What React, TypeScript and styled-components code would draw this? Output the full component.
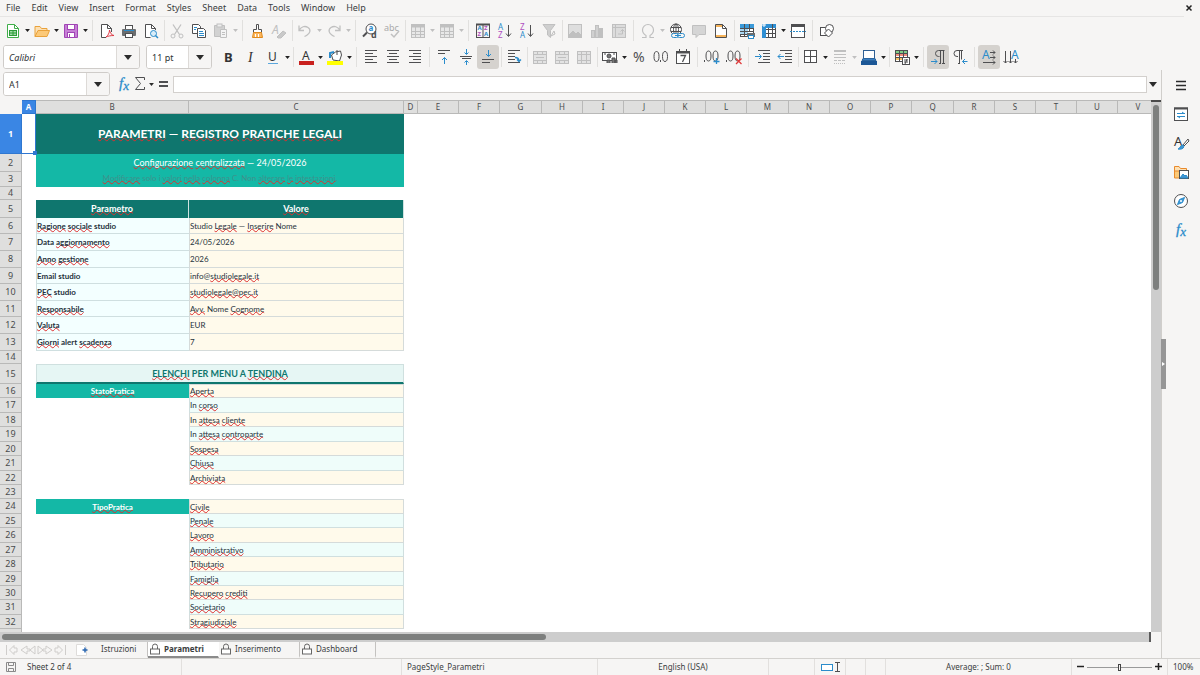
import React from "react";
import styled, { createGlobalStyle, css } from "styled-components";

const ink = "#4f4f51";
const blue = "#2b8ccb";
const off = "#c0c0c0";
const ui = `"Noto Sans", "Open Sans", sans-serif`;
const sheetFont = `Lato, "Noto Sans", sans-serif`;

const Global = createGlobalStyle`
  *, *::before, *::after { box-sizing: border-box; }
  body { margin: 0; background: #f6f5f4; font-family: ${ui}; color: #3a3d3e; }
  button, input { font: inherit; color: inherit; margin: 0; }
  button { border: 0; padding: 0; background: none; }
  svg { overflow: visible; flex: none; }
`;

/* ---------- frame ---------- */

const Window = styled.div`
  display: flex;
  flex-direction: column;
  height: 100vh;
  min-height: 320px;
  overflow: hidden;
`;

const MenuBar = styled.nav`
  display: flex;
  align-items: center;
  gap: 11px;
  height: 17px;
  padding: 0 7px 0 6px;
  margin-right: 16px;
  border-bottom: 1px solid #e6e5e4;
  font-size: 9px;
  line-height: 16px;
  white-space: nowrap;
`;

const MenuItem = styled.button``;

const TopRow = styled.header`
  position: relative;
`;

const CloseButton = styled.button`
  position: absolute;
  top: 0;
  right: 3px;
  width: 16px;
  height: 16px;
  display: flex;
  align-items: center;
  justify-content: center;
`;

const Toolbar = styled.div<{ $pad: number; $h: number }>`
  display: flex;
  align-items: center;
  height: ${(p) => p.$h}px;
  padding-left: ${(p) => p.$pad}px;
`;

const Tool = styled.button<{ $active?: boolean; $slim?: boolean }>`
  flex: none;
  width: ${(p) => (p.$slim ? 16 : 22)}px;
  height: 24px;
  display: flex;
  align-items: center;
  justify-content: center;
  border-radius: 3px;
  background: ${(p) => (p.$active ? "#d5d2ce" : "transparent")};
`;

const DropArrow = styled.button`
  flex: none;
  width: 7px;
  height: 24px;
  display: flex;
  align-items: center;
  justify-content: center;
`;

const Divider = styled.span<{ $wide?: boolean }>`
  flex: none;
  align-self: stretch;
  width: ${(p) => (p.$wide ? 7 : 4)}px;
  margin: 3px 0;
  background: linear-gradient(#e1e0de, #e1e0de) center / 1px 100% no-repeat;
`;

const Combo = styled.div<{ $width: number }>`
  flex: none;
  display: flex;
  width: ${(p) => p.$width}px;
  height: 24px;
  margin-right: 6px;
  border: 1px solid #cfccc9;
  border-radius: 3px;
  background: #fff;
  overflow: hidden;
`;

const ComboInput = styled.input<{ $italic?: boolean }>`
  flex: 1;
  min-width: 0;
  border: 0;
  padding: 0 5px;
  background: #fff;
  font-size: 9px;
  font-style: ${(p) => (p.$italic ? "italic" : "normal")};
  color: #2e3436;
`;

const ComboButton = styled.button`
  width: 23px;
  display: flex;
  align-items: center;
  justify-content: center;
  border-left: 1px solid #dddad7;
  background: #f6f5f4;
`;

const Body = styled.div`
  flex: 1;
  min-height: 0;
  display: flex;
`;

const Main = styled.main`
  flex: 1;
  min-width: 0;
  display: flex;
  flex-direction: column;
  border-right: 1px solid #d0cecb;
`;

const Sidebar = styled.aside`
  position: relative;
  width: 38px;
  display: flex;
  flex-direction: column;
  align-items: center;
  gap: 5px;
  padding-top: 3px;
`;

const SideButton = styled.button`
  width: 24px;
  height: 24px;
  display: flex;
  align-items: center;
  justify-content: center;
`;

const SideHandle = styled.button`
  position: absolute;
  left: -1px;
  top: 269px;
  width: 5px;
  height: 50px;
  display: flex;
  align-items: center;
  justify-content: center;
  background: #969696;
`;

const FormulaRow = styled.div`
  display: flex;
  align-items: center;
  height: 30px;
  padding: 0 5px 2px 3px;
  flex: none;
`;

const FormulaInput = styled.input`
  flex: 1;
  min-width: 0;
  height: 17px;
  margin: 0 2px;
  padding: 0 4px;
  border: 1px solid #d3d0cd;
  background: #fff;
  font-size: 9px;
`;

/* ---------- sheet ---------- */

const SheetRow = styled.div`
  flex: 1;
  min-height: 0;
  display: flex;
`;

const SheetArea = styled.div`
  flex: 1;
  min-width: 0;
  overflow: hidden;
  background: linear-gradient(#dfdfde, #dfdfde) top / 100% 14px no-repeat, #fff;
`;

const Grid = styled.table`
  table-layout: fixed;
  width: 1156px;
  border-collapse: separate;
  border-spacing: 0;
`;

const Col = styled.col<{ $w: number }>`
  width: ${(p) => p.$w}px;
`;

const Row = styled.tr<{ $h: number }>`
  height: ${(p) => p.$h}px;
`;

const Corner = styled.td`
  padding: 0;
  background: #f6f5f4;
`;

const headCell = css<{ $on?: boolean }>`
  padding: 0;
  text-align: center;
  vertical-align: middle;
  overflow: hidden;
  border: solid ${(p) => (p.$on ? "#2f77d0" : "#b9b9b8")};
  background: ${(p) => (p.$on ? "#3a86e4" : "#dfdfde")};
  color: ${(p) => (p.$on ? "#fff" : "#4a4c4d")};
  font-weight: ${(p) => (p.$on ? 700 : 400)};
`;

const ColHead = styled.th<{ $on?: boolean }>`
  ${headCell}
  border-width: 1px 1px 1px 0;
  font-size: 8px;
  line-height: 10px;
`;

const RowHead = styled.th<{ $on?: boolean }>`
  ${headCell}
  border-width: 0 1px 1px 0;
  font-size: 9px;
  line-height: 10px;
`;

type Kind = "title" | "sub" | "note" | "head" | "label" | "value" | "mint" | "section" | "tag";

const kinds: Record<Kind, ReturnType<typeof css>> = {
  title: css`background: #0f766e; color: #fff; font-size: 12px; line-height: 16px; font-weight: 700; text-align: center;`,
  sub: css`background: #14b8a6; color: #fff; font-size: 9px; text-align: center;`,
  note: css`background: #14b8a6; color: #3f918b; text-align: center; vertical-align: top;`,
  head: css`background: #0f766e; color: #fff; font-size: 9px; font-weight: 700; text-align: center; border-right: 1px solid #cfe3e1;`,
  label: css`background: #f3ffff; font-weight: 700; border: solid #cfdfe0; border-width: 0 0 1px 1px;`,
  value: css`background: #fffaeb; border: solid #d5dbda; border-width: 0 1px 1px 1px;`,
  mint: css`background: #effdfa; border: solid #d0dfdf; border-width: 0 1px 1px 1px;`,
  section: css`background: #e6f6f4; color: #0f766e; font-size: 9px; font-weight: 700; text-align: center; border: 1px solid #cfe0df; border-bottom: 2px solid #0f766e;`,
  tag: css`background: #14b8a6; color: #fff; font-weight: 700; text-align: center;`,
};

const Cell = styled.td<{ $kind: Kind; $topLine?: boolean }>`
  padding: 0;
  white-space: nowrap;
  vertical-align: middle;
  font-family: ${sheetFont};
  font-size: 8px;
  line-height: 12px;
  color: #26323c;
  ${(p) => kinds[p.$kind]}
  ${(p) => p.$topLine && css`border-top-width: 1px;`}
`;

const Blank = styled.td`
  padding: 0;
`;

const Cursor = styled.td`
  position: relative;
  padding: 0;
  border: solid #2f77d0;
  border-width: 0 1px 1px 0;
  &::after {
    content: "";
    position: absolute;
    right: -2px;
    bottom: -2px;
    width: 4px;
    height: 4px;
    background: #2f77d0;
  }
`;

const Misspelt = styled.span`
  text-decoration: underline wavy #dd2f2f 1px;
  text-underline-offset: -1px;
  text-decoration-skip-ink: none;
`;

const VTrack = styled.div`
  width: 10px;
  padding: 1px 2px 0;
  background: #cdcdcd;
  border-top: 2px solid #4a4a4a;
`;

const VThumb = styled.div`
  height: 35%;
  margin-top: 2px;
  border-radius: 3px;
  background: #7d7f7e;
`;

const HTrack = styled.div`
  flex: none;
  height: 10px;
  margin-right: 10px;
  padding: 2px 0 2px 2px;
  background: #cdcdcd;
  border-right: 2px solid #5a5a5a;
`;

const HThumb = styled.div`
  width: 47.4%;
  height: 6px;
  border-radius: 3px;
  background: #7d7f7e;
`;

const TabBar = styled.div`
  flex: none;
  display: flex;
  height: 16px;
  padding-left: 5px;
  font-size: 8px;
  line-height: 14px;
`;

const TabTools = styled.div`
  display: flex;
  align-items: center;
  width: 86px;
  gap: 9px;
`;

const Tab = styled.button<{ $active?: boolean; $width: number; $line?: boolean; $plain?: boolean }>`
  display: flex;
  align-items: center;
  gap: 4px;
  width: ${(p) => p.$width}px;
  padding-left: ${(p) => (p.$plain ? 10 : 2)}px;
  white-space: nowrap;
  background: ${(p) => (p.$active ? "#fff" : "transparent")};
  border-bottom: 2px solid ${(p) => (p.$active ? "#8b8b8b" : "transparent")};
  border-right: 1px solid ${(p) => (p.$line ? "#c4c2c0" : "transparent")};
  font-weight: ${(p) => (p.$active ? 700 : 400)};
`;

const StatusBar = styled.footer`
  flex: none;
  display: grid;
  grid-template-columns: 182fr 220fr 196fr 171fr 46px 31px 20px 20px 186fr 96px 32px;
  height: 17px;
  border-top: 1px solid #d3d1ce;
  font-size: 8px;
  line-height: 16px;
  white-space: nowrap;
`;

const Status = styled.div<{ $center?: boolean }>`
  display: flex;
  align-items: center;
  justify-content: ${(p) => (p.$center ? "center" : "flex-start")};
  gap: 10px;
  padding: 0 5px;
  border-right: 1px solid #e2e0de;
  overflow: hidden;
  &:last-child { border-right: 0; }
`;

const ZoomBox = styled(Status)`
  gap: 3px;
`;

const ZoomRange = styled.input`
  appearance: none;
  flex: 1;
  min-width: 0;
  height: 9px;
  background: linear-gradient(#9a9a9a, #9a9a9a) center / 100% 1px no-repeat;
  &::-webkit-slider-thumb {
    appearance: none;
    width: 3px;
    height: 7px;
    border: 1px solid #444;
    background: #f6f5f4;
  }
`;

/* ---------- icons ---------- */

type SvgProps = { children: React.ReactNode; w?: number; h?: number; c?: string };

const Svg = ({ children, w = 16, h = 16, c = ink }: SvgProps) => (
  <svg width={w} height={h} viewBox={`0 0 ${w} ${h}`} fill="none" stroke={c} strokeWidth="1" aria-hidden="true">
    {children}
  </svg>
);

const Glyph = ({ x, y, size, fill, children, bold, italic, serif }: {
  x: number; y: number; size: number; fill: string; children: string; bold?: boolean; italic?: boolean; serif?: boolean;
}) => (
  <text x={x} y={y} fontSize={size} fill={fill} stroke="none" fontWeight={bold ? 700 : 400} fontStyle={italic ? "italic" : "normal"}
    fontFamily={serif ? "Liberation Serif, serif" : "Noto Sans, sans-serif"}>{children}</text>
);

const Caret = ({ c = "#2b2b2b", w = 5 }: { c?: string; w?: number }) => (
  <svg width={w} height={w === 5 ? 3 : 5} viewBox="0 0 8 5" aria-hidden="true"><path d="M0 0h8L4 5z" fill={c} /></svg>
);

const lines = (rows: [number, number, number][]) => rows.map(([y, a, b]) => <path key={y} d={`M${a} ${y}.5H${b}`} />);

const TableShape = ({ c = off }: { c?: string }) => (
  <g stroke={c}><rect x="1.5" y="1.5" width="13" height="13" fill="#e8e8e8" /><path d="M1.5 3h13" strokeWidth="3" /><path d="M1 8.5h14M1 11.5h14M5.5 2v13M10.5 2v13" /></g>
);

const Fx = () => (
  <Svg>
    <text x="3" y="12" fontSize="15" fill={blue} stroke={blue} strokeWidth="0.3" fontStyle="italic" fontFamily="Liberation Serif, serif">
      f<tspan dy="2" fontSize="13">x</tspan>
    </text>
  </Svg>
);

const Lock = () => (
  <Svg w={10} h={12} c="#666"><rect x="0.5" y="6" width="9" height="5" fill="#fff" /><path d="M2.5 6V3.5a2.500 2.500 0 0 1 5 0V6" /></Svg>
);

const icons: Record<string, React.ReactNode> = {
  new: <Svg><path d="M2.500 1.500h7l4 4v9h-11z" fill="#fff" stroke="#3fae49" /><path d="M9.500 1.500v4h4" stroke="#3fae49" /><rect x="4.500" y="7.500" width="7" height="5" fill="#9fdca5" stroke="#2c9a39" /><path d="M4.500 10h7M8 7.500v5" stroke="#2c9a39" /></Svg>,
  open: <Svg><path d="M1 13.500v-10h5l1.500 2H13v2" fill="#fde0b3" stroke="#e9a23b" /><path d="M1 13.500l3-6h11.500l-2.500 6z" fill="#fcc978" stroke="#e9a23b" /></Svg>,
  save: <Svg c="#a145b5"><path d="M1.500 1.500h13v13h-13z" fill="#c77fd6" /><rect x="4.500" y="1.500" width="7" height="5" fill="#fff" /><rect x="4.500" y="9.500" width="7" height="5" fill="#fff" /><path d="M6.500 11v3" /></Svg>,
  pdf: <Svg><path d="M12.500 9V5.500l-4-4h-6v13H7" fill="#fff" /><path d="M8.500 1.500v4h4" /><path d="M7 14c2-1.500 3.500-4 3.500-7 .5 3 2 5 4.500 5.500-3 0-6 .5-8 1.500z" stroke="#e03a46" /></Svg>,
  print: <Svg><rect x="4.500" y="2.500" width="7" height="4" fill="#fff" /><rect x="1" y="6" width="14" height="7" rx="1" fill="#6b6e70" stroke="none" /><path d="M3 7.500h10" stroke={blue} /><rect x="4.500" y="10.500" width="7" height="4" fill="#fff" /></Svg>,
  preview: <Svg><path d="M12.500 7V5.500l-4-4h-6v13h5" fill="#fff" /><path d="M8.500 1.500v4h4" /><circle cx="10.500" cy="10.500" r="3" stroke={blue} fill="#d9edf9" /><path d="M12.500 12.500l2.500 2.500" stroke={blue} strokeWidth="1.500" /></Svg>,
  cut: <Svg c={off}><path d="M4 1.500l6.500 10M12 1.500l-6.500 10" strokeWidth="1.300" /><circle cx="4" cy="13" r="2" /><circle cx="12" cy="13" r="2" /></Svg>,
  copy: <Svg><path d="M1.500 1.500h6l2 2v7h-8z" fill="#fff" /><path d="M6.500 5.500h6l2 2v7h-8z" fill="#fff" /><path d="M3 4.500h3M3 6.500h2M8 8.500h4M8 10.500h5M8 12.500h5" stroke={blue} /></Svg>,
  paste: <Svg c={off}><path d="M1.500 2.500h10v11h-10z" fill="#d2d2d2" /><rect x="4" y="1" width="5" height="3" fill="#eee" /><path d="M7.500 6.500h6v8h-6z" fill="#f4f4f4" /><path d="M9 9.500h3M9 11.500h3" /></Svg>,
  brush: <Svg><path d="M7.500 1.500h2v5h3v3h-8v-3h3z" fill="#fff" /><path d="M4.500 9.500h8l1 5h-10z" fill="#fcb65c" stroke="#e08a1d" /><path d="M6.500 11v3M9.500 11v3" stroke="#fff" /></Svg>,
  clear: <Svg c={off}><Glyph x={1} y={11} size={12} fill={off} italic>A</Glyph><path d="M6 14l6-6 3 2-5 5H7z" fill="#c9c9c9" /></Svg>,
  undo: <Svg c={off}><path d="M2 2.500v5h5M2 7.500c2-4 6-5 9-3s3 6-3.500 9" strokeWidth="1.300" /></Svg>,
  redo: <Svg c={off}><path d="M14 2.500v5H9M14 7.500c-2-4-6-5-9-3s-3 6 3.500 9" strokeWidth="1.300" /></Svg>,
  find: <Svg><circle cx="9" cy="6" r="5" fill="#fff" /><path d="M5 9.500l-4 4" strokeWidth="2" /><Glyph x={6.500} y={8} size={8} fill={blue} bold>a</Glyph><Glyph x={9} y={15} size={9} fill={ink} bold>d</Glyph></Svg>,
  spell: <Svg c={off}><Glyph x={0} y={8} size={9} fill="#aaaaaa">abc</Glyph><path d="M7 11l3 3 5-6" strokeWidth="1.500" /></Svg>,
  table: <Svg><TableShape /></Svg>,
  sort: <Svg><path d="M1.500 1v14M8 1v14M14.500 1v14M1 14.500h14" /><path d="M1 1.500h14" strokeWidth="2" /><Glyph x={2.500} y={7} size={6} fill={blue} bold>A</Glyph><Glyph x={2.500} y={13} size={6} fill="#b04fc0" bold>Z</Glyph><Glyph x={9} y={7} size={6} fill="#b04fc0" bold>Z</Glyph><Glyph x={9} y={13} size={6} fill={blue} bold>A</Glyph></Svg>,
  asc: <Svg><Glyph x={1} y={7} size={8} fill={blue}>A</Glyph><Glyph x={1} y={15} size={8} fill="#b04fc0">Z</Glyph><path d="M11.500 2v11M9 10.500l2.500 3 2.500-3" /></Svg>,
  desc: <Svg><Glyph x={1} y={7} size={8} fill="#b04fc0">Z</Glyph><Glyph x={1} y={15} size={8} fill={blue}>A</Glyph><path d="M11.500 2v11M9 10.500l2.500 3 2.500-3" /></Svg>,
  filter: <Svg c={off}><path d="M2 1.500h12l-4.500 6v7l-3-2.500V7.500z" fill="#cfcfcf" /><path d="M10 13l3-5 1 3z" /></Svg>,
  image: <Svg c={off}><rect x="1.500" y="1.500" width="13" height="13" fill="#dedede" /><path d="M2 12l4-4 3 3 2-2 3 3v2H2z" fill={off} /></Svg>,
  chart: <Svg c={off}><rect x="2.500" y="7.500" width="3" height="7" fill="#d0d0d0" /><rect x="6.500" y="2.500" width="3" height="12" fill="#d0d0d0" /><rect x="10.500" y="5.500" width="3" height="9" fill={off} /></Svg>,
  pivot: <Svg c={off}><rect x="1.500" y="1.500" width="13" height="13" fill="#dcdcdc" /><path d="M1 4.500h14M4.500 1v14M7 11h4.500V6.500M9.500 8.500l2-2 2 2" /></Svg>,
  omega: <Svg c={off}><path d="M2 14.500h4v-2C3.500 11 2.500 9 2.500 7a5.500 5.500 0 0 1 11 0c0 2-1 4-3.500 5.500v2h4" strokeWidth="1.200" /></Svg>,
  globe: <Svg><circle cx="7" cy="6.500" r="5.500" fill="#fff" /><ellipse cx="7" cy="6.500" rx="2.500" ry="5.500" /><path d="M2 4.500h10M2 8.500h10M7 1v11" /><rect x="2.500" y="10.500" width="7" height="4" rx="2" stroke={blue} fill="#f6f5f4" /><rect x="8.500" y="10.500" width="7" height="4" rx="2" stroke={blue} fill="#f6f5f4" /><path d="M6 12.500h6" stroke={blue} /></Svg>,
  comment: <Svg c={off}><path d="M1.500 2.500h13v9H8l-3 3v-3H1.500z" fill="#d5d5d5" /></Svg>,
  header: <Svg><path d="M2.500 1.500h7l4 4v9h-11z" fill="#fff" /><path d="M3 3h6M3 13h10" stroke="#f5b35a" strokeWidth="2" /><path d="M9.500 1.500v4h4" /></Svg>,
  printArea: <Svg><rect x="1.500" y="1.500" width="13" height="12" fill="#fff" /><rect x="1" y="1" width="14" height="4" fill="#3b9ad9" stroke="none" /><rect x="1" y="5" width="8" height="6" fill="#a9d7f3" stroke="none" /><path d="M1 5.500h14M1 8.500h14M1 11.500h8M5.500 1v12M10.500 1v8" /><rect x="8" y="10" width="8" height="4" fill="#6b6e70" stroke="none" /><rect x="9.500" y="12.500" width="5" height="3" fill="#fff" stroke={blue} /></Svg>,
  freeze: <Svg><rect x="1.500" y="1.500" width="13" height="13" fill="#fff" /><path d="M1 3h14M3 1v14" stroke="#2f8fd3" strokeWidth="4" /><path d="M5 6.500h10M5 10.500h10M7.500 5v10M11.500 1v14" /><path d="M3 0v4M1 2h4" stroke="#fff" /></Svg>,
  split: <Svg><rect x="1.500" y="1.500" width="13" height="13" fill="#fff" /><path d="M1 2.500h14" strokeWidth="3" /><path d="M0 8.500h16" stroke={blue} strokeDasharray="2 1" /></Svg>,
  shapes: <Svg><rect x="1.500" y="4.500" width="8" height="8" fill="#fff" /><circle cx="10.500" cy="5.500" r="4" fill="#fff" /><path d="M9.500 6l4 4-4 4-4-4z" fill="#fff" /></Svg>,
  bold: <Svg><Glyph x={3} y={13} size={13} fill="#333" bold>B</Glyph></Svg>,
  italic: <Svg><Glyph x={5} y={13} size={14} fill="#333" italic serif>I</Glyph></Svg>,
  underline: <Svg><Glyph x={3} y={12} size={12} fill="#333">U</Glyph><path d="M3 14.500h10" stroke="#5ba7dc" /></Svg>,
  color: <Svg><Glyph x={4} y={11} size={12} fill="#333">A</Glyph><path d="M1 14h15" stroke="#c9211e" strokeWidth="4" /></Svg>,
  highlight: <Svg><path d="M6 11L4.500 6l4-3 5-1 1 4-2 6z" fill="#fff" /><path d="M3 9V4l4-1" stroke={blue} strokeWidth="2" /><path d="M10 1v5" /><path d="M0 14h16" stroke="#ffff00" strokeWidth="4" /></Svg>,
  left: <Svg>{lines([[1, 2, 14], [4, 2, 10], [7, 2, 14], [10, 2, 10], [13, 2, 14]])}</Svg>,
  center: <Svg>{lines([[1, 2, 14], [4, 4, 12], [7, 2, 14], [10, 4, 12], [13, 2, 14]])}</Svg>,
  right: <Svg>{lines([[1, 2, 14], [4, 6, 14], [7, 2, 14], [10, 6, 14], [13, 2, 14]])}</Svg>,
  top: <Svg>{lines([[1, 2, 14], [4, 2, 9]])}<path d="M8.500 15V8.500M6 11l2.500-2.500L11 11" stroke={blue} /></Svg>,
  middle: <Svg>{lines([[7, 2, 14], [9, 4, 13]])}<path d="M8.500 0v5M6.500 3.500l2 2 2-2M8.500 16v-4M6.500 13.500l2-2 2 2" stroke={blue} /></Svg>,
  bottom: <Svg>{lines([[10, 2, 14], [13, 2, 10]])}<path d="M8.500 1v6M6 5l2.500 2.500L11 5" stroke={blue} /></Svg>,
  wrap: <Svg>{lines([[1, 2, 14], [4, 2, 9], [7, 2, 9], [10, 2, 9], [13, 2, 14]])}<path d="M9 8.500c3 0 4 1 4 3.500M11 10.500l2 2 2-2" stroke={blue} strokeWidth="1.300" /></Svg>,
  merge: <Svg c={off}><rect x="1.500" y="2.500" width="13" height="12" fill="#e3e3e3" /><path d="M1 5.500h14M1 11.500h14M5.500 2v3M10.500 2v3M5.500 12v3M10.500 12v3M4 8.500h8" /></Svg>,
  split2: <Svg c={off}><rect x="1.500" y="2.500" width="13" height="12" fill="#e3e3e3" /><path d="M1 5.500h14M1 11.500h14M5.500 2v13M10.500 2v13" /></Svg>,
  currency: <Svg><rect x="0.500" y="3.500" width="14" height="8" fill="#fff" /><circle cx="7" cy="7" r="2" fill="#777" /><path d="M5 14v-3h3v3M10 14V9h3v5M13 14v-3h2v3" fill="#777" /><path d="M2 5h2M11 5h2" /></Svg>,
  percent: <Svg><Glyph x={2} y={13} size={14} fill={ink}>%</Glyph></Svg>,
  number: <Svg><ellipse cx="3.500" cy="7.500" rx="2.500" ry="5" /><path d="M7.500 11v2" /><ellipse cx="12" cy="7.500" rx="2.500" ry="5" /></Svg>,
  date: <Svg><rect x="1.500" y="2.500" width="13" height="12" fill="#fff" /><path d="M1 3.500h14" strokeWidth="2" /><path d="M4.500 0v3M11.500 0v3" /><path d="M5.500 6.500h5l-3 6.500" strokeWidth="1.300" /></Svg>,
  addDec: <Svg><path d="M.5 11v2" /><ellipse cx="4.500" cy="7" rx="2.500" ry="5" /><ellipse cx="11.500" cy="7" rx="2.500" ry="5" /><path d="M12.500 9v6M9.500 12.500h6" stroke={blue} strokeWidth="1.300" /></Svg>,
  delDec: <Svg><path d="M.5 11v2" /><ellipse cx="4.500" cy="7" rx="2.500" ry="5" /><ellipse cx="11.500" cy="7" rx="2.500" ry="5" /><path d="M10 9.500l5.500 5.500M15.500 9.500L10 15" stroke="#e03a3a" strokeWidth="1.300" /></Svg>,
  indent: <Svg>{lines([[1, 3, 15], [4, 8, 15], [7, 8, 15], [10, 8, 15], [13, 3, 15]])}<path d="M0 7.500h6M4 5l2.500 2.500L4 10" stroke={blue} /></Svg>,
  outdent: <Svg>{lines([[1, 3, 15], [4, 8, 15], [7, 8, 15], [10, 8, 15], [13, 3, 15]])}<path d="M1 7.500h6M3.500 5L1 7.500 3.500 10" stroke={blue} /></Svg>,
  border: <Svg><rect x="1.500" y="1.500" width="12" height="12" fill="#fff" /><path d="M7.500 1v13M1 7.500h13" /></Svg>,
  borderStyle: <Svg c={off}><path d="M2 2h12" strokeWidth="2" /><path d="M2 5.500h12M2 8.500h12" /><path d="M2 11.500h12" strokeDasharray="3 1" /><path d="M2 14.500h12" strokeDasharray="1 1" /></Svg>,
  borderColor: <Svg><rect x="2.500" y="1.500" width="11" height="8" fill="#fff" stroke="#2f5f93" /><path d="M2 9.500h12l1 2H1z" fill="#3b7ec0" stroke="#2b659f" /><path d="M0 14h16" stroke="#1c5796" strokeWidth="4" /></Svg>,
  conditional: <Svg><rect x="1.500" y="1.500" width="12" height="11" fill="#fff" /><path d="M2 3h11" stroke="#7fcf87" strokeWidth="2" /><path d="M2 6h11" stroke="#f08a7a" strokeWidth="2" /><path d="M2 10h6" stroke="#f6c26b" strokeWidth="2" /><path d="M1 4.500h13M1 8.500h13M5.500 1v12M9.500 1v8" /><rect x="8.500" y="8.500" width="7" height="7" fill="#fff" /><path d="M10 11h4M10 13h4M13 10l-2 5" /></Svg>,
  ltr: <Svg><path d="M14.500 1.500H8.500a3 3 0 0 0 0 6h1M10.500 1.500v13M13.500 1.500v13M9 14.500h2M12 14.500h3" /><path d="M1 12.500h6M4.500 10L7 12.500 4.500 15" stroke={blue} /></Svg>,
  rtl: <Svg><path d="M11 1.500H5a3 3 0 0 0 0 6h1M7.500 1.500v13M9.500 1.500v9M6 14.500h2" /><path d="M15.500 12.500h-5M13 10l-2.500 2.500L13 15" stroke={blue} /></Svg>,
  horiz: <Svg><Glyph x={1} y={10} size={12} fill={blue}>A</Glyph><path d="M9 3.500h5M12 1.500l2 2-2 2M9 8.500h5M12 6.500l2 2-2 2M2 13.500h12M12 11.500l2 2-2 2" /></Svg>,
  vert: <Svg><Glyph x={8} y={10} size={12} fill={blue}>A</Glyph><path d="M2.500 2v12M.5 12l2 2 2-2M7.500 2v12M5.500 12l2 2 2-2M12.500 10v4M10.500 12l2 2 2-2" /></Svg>,
  sum: <Svg><path d="M12.500 4v-2.500h-9l5 6-5 6h9V11" /></Svg>,
  equals: <Svg><path d="M4 6h9M4 10h9" strokeWidth="2" /></Svg>,
};

type Item = { id: string; label: string; drop?: "on" | "off"; active?: boolean } | "sep" | "wide";

const standardBar: Item[] = [
  { id: "new", label: "New", drop: "on" }, { id: "open", label: "Open", drop: "on" }, { id: "save", label: "Save", drop: "on" }, "wide",
  { id: "pdf", label: "Export as PDF" }, { id: "print", label: "Print" }, { id: "preview", label: "Print preview" }, "sep",
  { id: "cut", label: "Cut" }, { id: "copy", label: "Copy" }, { id: "paste", label: "Paste", drop: "off" }, "wide",
  { id: "brush", label: "Clone formatting" }, { id: "clear", label: "Clear formatting" }, "sep",
  { id: "undo", label: "Undo", drop: "off" }, { id: "redo", label: "Redo", drop: "off" }, "wide",
  { id: "find", label: "Find and replace" }, { id: "spell", label: "Spelling" }, "sep",
  { id: "table", label: "Row", drop: "off" }, { id: "table", label: "Column", drop: "off" }, "wide",
  { id: "sort", label: "Sort" }, { id: "asc", label: "Sort ascending" }, { id: "desc", label: "Sort descending" }, { id: "filter", label: "AutoFilter" }, "sep",
  { id: "image", label: "Insert image" }, { id: "chart", label: "Insert chart" }, { id: "pivot", label: "Pivot table" }, "wide",
  { id: "omega", label: "Special character", drop: "off" }, { id: "globe", label: "Hyperlink" }, { id: "comment", label: "Comment" }, { id: "header", label: "Headers and footers" }, "sep",
  { id: "printArea", label: "Define print area" }, { id: "freeze", label: "Freeze rows and columns", drop: "on" }, { id: "split", label: "Split window" }, "wide",
  { id: "shapes", label: "Draw functions" },
];

const formatBar: Item[] = [
  { id: "bold", label: "Bold" }, { id: "italic", label: "Italic" }, { id: "underline", label: "Underline", drop: "on" }, "sep",
  { id: "color", label: "Font color", drop: "on" }, { id: "highlight", label: "Highlighting color", drop: "on" }, "wide",
  { id: "left", label: "Align left" }, { id: "center", label: "Center" }, { id: "right", label: "Align right" }, "wide",
  { id: "top", label: "Align top" }, { id: "middle", label: "Center vertically" }, { id: "bottom", label: "Align bottom", active: true }, "sep",
  { id: "wrap", label: "Wrap text" }, "sep",
  { id: "merge", label: "Merge and center" }, { id: "merge", label: "Merge cells" }, { id: "split2", label: "Unmerge cells" }, "sep",
  { id: "currency", label: "Currency", drop: "on" }, { id: "percent", label: "Percent" }, { id: "number", label: "Number" }, { id: "date", label: "Date" }, "wide",
  { id: "addDec", label: "Add decimal place" }, { id: "delDec", label: "Delete decimal place" }, "wide",
  { id: "indent", label: "Increase indent" }, { id: "outdent", label: "Decrease indent" }, "sep",
  { id: "border", label: "Borders", drop: "on" }, { id: "borderStyle", label: "Border style", drop: "off" }, { id: "borderColor", label: "Border color", drop: "on" }, "sep",
  { id: "conditional", label: "Conditional formatting", drop: "on" }, "wide",
  { id: "ltr", label: "Left to right", active: true }, { id: "rtl", label: "Right to left" }, "wide",
  { id: "horiz", label: "Horizontal text", active: true }, { id: "vert", label: "Vertical text" },
];

const Tools = ({ items }: { items: Item[] }) => (
  <>
    {items.map((it, i) =>
      typeof it === "string" ? (
        <Divider key={i} $wide={it === "wide"} />
      ) : (
        <React.Fragment key={i}>
          <Tool aria-label={it.label} $active={it.active}>{icons[it.id]}</Tool>
          {it.drop && (
            <DropArrow aria-label={`${it.label} options`}><Caret c={it.drop === "on" ? "#222" : off} /></DropArrow>
          )}
        </React.Fragment>
      )
    )}
  </>
);

/* ---------- sheet data: words between tildes are flagged by the spell checker ---------- */

type CellData = { kind: Kind; text: string; span?: boolean; topLine?: boolean };
type RowData = { h: number; b?: CellData; c?: CellData };

const pair = (h: number, label: string, value: string): RowData => ({
  h, b: { kind: "label", text: label }, c: { kind: "value", text: value },
});
const item = (h: number, kind: Kind, text: string, tag?: string): RowData => ({
  h, b: tag ? { kind: "tag", text: tag } : undefined, c: { kind, text, topLine: !!tag },
});

const rows: RowData[] = [
  { h: 40, b: { kind: "title", text: "~PARAMETRI~ — ~REGISTRO~ ~PRATICHE~ ~LEGALI~", span: true } },
  { h: 18, b: { kind: "sub", text: "~Configurazione~ ~centralizzata~ — 24/05/2026", span: true } },
  { h: 15, b: { kind: "note", text: "~Modificare~ solo i ~valori~ ~nella~ ~colonna~ C. Non ~alterare~ ~le~ ~intestazioni~.", span: true } },
  { h: 13 },
  { h: 18, b: { kind: "head", text: "~Parametro~" }, c: { kind: "head", text: "~Valore~" } },
  pair(16, "~Ragione~ ~sociale~ studio", "Studio ~Legale~ — ~Inserire~ Nome"),
  pair(17, "Data ~aggiornamento~", "24/05/2026"),
  pair(17, "~Anno~ ~gestione~", "2026"),
  pair(16, "Email studio", "info@~studiolegale.it~"),
  pair(17, "~PEC~ studio", "~studiolegale@pec.it~"),
  pair(16, "~Responsabile~", "~Avv.~ Nome ~Cognome~"),
  pair(17, "~Valuta~", "EUR"),
  pair(17, "~Giorni~ alert ~scadenza~", "7"),
  { h: 13 },
  { h: 20, b: { kind: "section", text: "~ELENCHI~ PER MENU A ~TENDINA~", span: true } },
  item(14, "value", "~Aperta~", "~StatoPratica~"),
  item(15, "mint", "In ~corso~"),
  item(14, "value", "In ~attesa~ ~cliente~"),
  item(15, "mint", "In ~attesa~ ~controparte~"),
  item(14, "value", "~Sospesa~"),
  item(15, "mint", "~Chiusa~"),
  item(14, "value", "~Archiviata~"),
  { h: 14 },
  item(15, "value", "~Civile~", "~TipoPratica~"),
  item(14, "mint", "~Penale~"),
  item(15, "value", "~Lavoro~"),
  item(14, "mint", "~Amministrativo~"),
  item(15, "value", "~Tributario~"),
  item(14, "mint", "~Famiglia~"),
  item(14, "value", "~Recupero~ ~crediti~"),
  item(15, "mint", "~Societario~"),
  item(14, "value", "~Stragiudiziale~"),
  { h: 14 },
];

const columns: [string, number][] = [
  ["A", 14], ["B", 153], ["C", 215], ["D", 14], ["E", 41], ["F", 41], ["G", 42], ["H", 41], ["I", 41], ["J", 41], ["K", 41],
  ["L", 41], ["M", 42], ["N", 41], ["O", 41], ["P", 41], ["Q", 42], ["R", 41], ["S", 41], ["T", 41], ["U", 41], ["V", 41],
];

const Checked = ({ text }: { text: string }) => (
  <>{text.split("~").map((part, i) => (i % 2 ? <Misspelt key={i}>{part}</Misspelt> : part))}</>
);

const DataCell = ({ data }: { data: CellData }) => (
  <Cell $kind={data.kind} $topLine={data.topLine} colSpan={data.span ? 2 : 1}><Checked text={data.text} /></Cell>
);

const Sheet = () => (
  <Grid>
    <colgroup>
      <Col $w={22} />
      {columns.map(([name, w]) => <Col key={name} $w={w} />)}
    </colgroup>
    <thead>
      <Row $h={14}>
        <Corner />
        {columns.map(([name]) => <ColHead key={name} scope="col" $on={name === "A"}>{name}</ColHead>)}
      </Row>
    </thead>
    <tbody>
      {rows.map((r, i) => (
        <Row key={i} $h={r.h}>
          <RowHead scope="row" $on={i === 0}>{i < 32 ? i + 1 : ""}</RowHead>
          {i === 0 ? <Cursor /> : <Blank />}
          {r.b ? <DataCell data={r.b} /> : <Blank />}
          {!r.b?.span && (r.c ? <DataCell data={r.c} /> : <Blank />)}
        </Row>
      ))}
    </tbody>
  </Grid>
);

const menus = ["File", "Edit", "View", "Insert", "Format", "Styles", "Sheet", "Data", "Tools", "Window", "Help"];

export default function App() {
  return (
    <Window>
      <Global />
      <TopRow>
        <MenuBar>{menus.map((m) => <MenuItem key={m}>{m}</MenuItem>)}</MenuBar>
        <CloseButton aria-label="Close document"><Svg w={6} h={6} c="#222"><path d="M.5.5l5 5M5.500.5l-5 5" strokeWidth="1.500" /></Svg></CloseButton>
        <Toolbar $pad={2} $h={27}><Tools items={standardBar} /></Toolbar>
        <Toolbar $pad={3} $h={26}>
          <Combo $width={137}>
            <ComboInput aria-label="Font name" defaultValue="Calibri" $italic />
            <ComboButton aria-label="Show fonts"><Caret w={8} /></ComboButton>
          </Combo>
          <Combo $width={66}>
            <ComboInput aria-label="Font size" defaultValue="11 pt" />
            <ComboButton aria-label="Show sizes"><Caret w={8} /></ComboButton>
          </Combo>
          <Tools items={formatBar} />
        </Toolbar>
      </TopRow>
      <Body>
        <Main>
          <FormulaRow>
            <Combo $width={107}>
              <ComboInput aria-label="Name box" defaultValue="A1" />
              <ComboButton aria-label="Show names"><Caret w={8} /></ComboButton>
            </Combo>
            <Tool $slim aria-label="Function wizard"><Fx /></Tool>
            <Tool $slim aria-label="Sum">{icons.sum}</Tool>
            <DropArrow aria-label="Sum options"><Caret /></DropArrow>
            <Tool $slim aria-label="Formula">{icons.equals}</Tool>
            <FormulaInput aria-label="Input line" defaultValue="" />
            <DropArrow aria-label="Expand formula bar"><Caret w={8} /></DropArrow>
          </FormulaRow>
          <SheetRow>
            <SheetArea><Sheet /></SheetArea>
            <VTrack><VThumb /></VTrack>
          </SheetRow>
          <HTrack><HThumb /></HTrack>
          <TabBar>
            <TabTools>
              <Svg w={62} h={12} c="#cfcdcb">
                <path d="M1.500 1v10M9 1.500L4.500 6 9 10.500V8h3V4H9zM22 2l-6 4 6 4V7h3V5h-3zM30 2l-5 4 5 4zM33 2l5 4-5 4zM41 2l6 4-6 4V7h-3V5h3zM53 1.500L57.500 6 53 10.500V8h-3V4h3zM60.500 1v10" />
              </Svg>
              <Svg w={12} h={12} c={off}><path d="M.5.5h7l3 3v8H.5z" fill="#fff" stroke="#dedcda" /><path d="M6.500 6h5M9 3.500v5" stroke="#2a66b0" strokeWidth="1.500" /></Svg>
            </TabTools>
            <Tab $width={57} $plain $line>Istruzioni</Tab>
            <Tab $width={71} $active><Lock />Parametri</Tab>
            <Tab $width={81} $line><Lock />Inserimento</Tab>
            <Tab $width={76} $line><Lock />Dashboard</Tab>
          </TabBar>
        </Main>
        <Sidebar>
          <SideButton aria-label="Sidebar settings"><Svg c="#2b2b2b"><path d="M3 4.500h10M3 8.500h10M3 12.500h10" strokeWidth="1.300" /></Svg></SideButton>
          <SideButton aria-label="Properties"><Svg><rect x="1.500" y="2" width="13" height="12.500" fill="#fff" /><path d="M1 2.500h14" strokeWidth="2" /><path d="M4 7.500h8M4 10.500h8M9 6l2 1.500M7 12l-2-1.500" stroke={blue} /></Svg></SideButton>
          <SideButton aria-label="Styles"><Svg><Glyph x={1} y={11} size={13} fill="#333">A</Glyph><path d="M15 4l-5 6 1 1 5-5z" fill="#fff" /><path d="M5 14c2 0 2-4 5-4 2 2 0 5-5 4z" fill="#3f97d5" stroke={blue} /></Svg></SideButton>
          <SideButton aria-label="Gallery"><Svg><path d="M1.500 14V2.500H6L7.500 4.500h6V7" fill="#fde0b3" stroke="#e98a2b" /><path d="M1.500 14V7h5v7z" fill="#fcc978" stroke="#e98a2b" /><rect x="6.500" y="6.500" width="9" height="8" fill="#fff" /><path d="M7 14l3-4 2 2 1-1 2 3z" fill="#3f97d5" stroke={blue} /></Svg></SideButton>
          <SideButton aria-label="Navigator"><Svg><circle cx="8" cy="8" r="6.500" fill="#fff" /><path d="M11.500 4.500L9.500 9.500 4.500 11.500 6.500 6.500z" fill="#3f97d5" stroke={blue} /><circle cx="8" cy="8" r="1" fill="#fff" stroke="none" /></Svg></SideButton>
          <SideButton aria-label="Functions"><Fx /></SideButton>
          <SideHandle aria-label="Hide sidebar"><Svg w={3} h={4} c="none"><path d="M0 0l3 2-3 2z" fill="#fff" /></Svg></SideHandle>
        </Sidebar>
      </Body>
      <StatusBar>
        <Status>
          <Svg w={12} h={12} c="#8a8a8a"><path d="M1.500 1.500h9v9h-9zM3.500 1.500v3h5v-3M3.500 10.500v-3h5v3" /></Svg>
          Sheet 2 of 4
        </Status>
        <Status />
        <Status>PageStyle_Parametri</Status>
        <Status $center>English (USA)</Status>
        <Status />
        <Status><Svg w={20} h={12}><rect x="1.500" y="3.500" width="11" height="6" stroke={blue} fill="#fff" /><path d="M15 1.500h5M15 10.500h5M17.500 1.500v9" /></Svg></Status>
        <Status />
        <Status />
        <Status $center>Average: ; Sum: 0</Status>
        <ZoomBox>
          <button aria-label="Zoom out"><Svg w={7} h={7} c="#222"><path d="M0 3.500h7" strokeWidth="1.500" /></Svg></button>
          <ZoomRange type="range" aria-label="Zoom" defaultValue={50} />
          <button aria-label="Zoom in"><Svg w={7} h={7} c="#222"><path d="M0 3.500h7M3.500 0v7" strokeWidth="1.500" /></Svg></button>
        </ZoomBox>
        <Status>100%</Status>
      </StatusBar>
    </Window>
  );
}
